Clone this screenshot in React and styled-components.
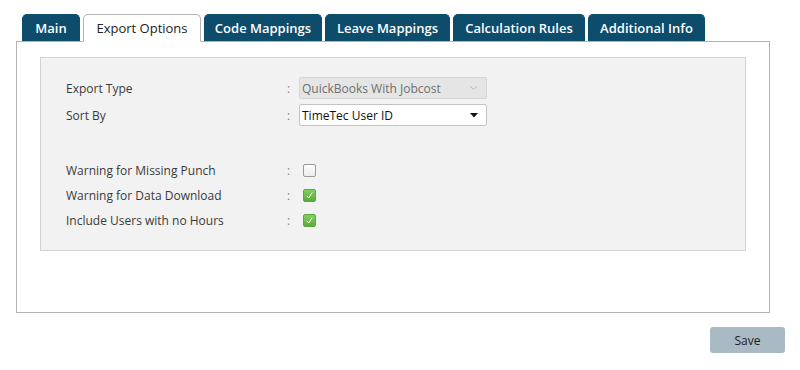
import React, { useState } from 'react';
import styled, { createGlobalStyle } from 'styled-components';

const GlobalStyle = createGlobalStyle`
  body {
    margin: 0;
    background: #ffffff;
    font-family: "Open Sans", "Liberation Sans", sans-serif;
    color: #333;
  }
`;

const Page = styled.div`
  padding: 13px 15px 0 16px;
  width: 800px;
  box-sizing: border-box;
`;

const TabBar = styled.div`
  display: flex;
  gap: 3px;
  margin-left: 6px;
  height: 28px;
  align-items: flex-end;
  position: relative;
  z-index: 1;
`;

const Tab = styled.div`
  box-sizing: border-box;
  width: ${(p) => p.$w}px;
  height: ${(p) => (p.$active ? 28 : 27)}px;
  display: flex;
  align-items: center;
  justify-content: center;
  font-size: 13px;
  font-weight: ${(p) => (p.$active ? 400 : 600)};
  color: ${(p) => (p.$active ? '#222' : '#ffffff')};
  background: ${(p) => (p.$active ? '#ffffff' : '#0d4c6b')};
  border: 1px solid ${(p) => (p.$active ? '#b5b5b5' : '#0d4c6b')};
  border-bottom: ${(p) => (p.$active ? '1px solid #fff' : 'none')};
  border-radius: 5px 5px 0 0;
  cursor: pointer;
  margin-bottom: ${(p) => (p.$active ? '-1px' : '0')};
`;

const Panel = styled.div`
  box-sizing: border-box;
  width: 754px;
  height: 272px;
  border: 1px solid #b3b3b3;
  padding: 15px 23px;
`;

const Inner = styled.div`
  box-sizing: border-box;
  height: 194px;
  background: #f2f2f2;
  border: 1px solid #d3d3d3;
  padding: 19px 25px;
  display: flex;
  flex-direction: column;
`;

const Row = styled.div`
  display: grid;
  grid-template-columns: 221px 12px auto;
  align-items: center;
  height: ${(p) => p.$h || 22}px;
  margin-top: ${(p) => p.$mt || 0}px;
  font-size: 12px;
  color: #3a3a3a;
`;

const Label = styled.span``;

const Colon = styled.span`
  color: #888;
`;

const Select = styled.div`
  box-sizing: border-box;
  width: 188px;
  height: 22px;
  display: flex;
  align-items: center;
  justify-content: space-between;
  padding: 0 8px 0 2px;
  border: 1px solid ${(p) => (p.$disabled ? '#d6d6d6' : '#c4c4c4')};
  border-radius: 2px;
  background: ${(p) => (p.$disabled ? '#e5e5e5' : '#ffffff')};
  color: ${(p) => (p.$disabled ? '#6f6f6f' : '#111')};
  font-size: 12px;
`;

const Check = styled.div`
  box-sizing: border-box;
  width: 13px;
  height: 13px;
  margin-left: 4px;
  border-radius: 2px;
  border: 1px solid ${(p) => (p.$on ? '#5aa83b' : '#9a9a9a')};
  background: ${(p) =>
    p.$on ? 'linear-gradient(#84d062, #5aab3a)' : 'linear-gradient(#fdfdfd, #ececec)'};
  display: flex;
  align-items: center;
  justify-content: center;
`;

const Footer = styled.div`
  display: flex;
  justify-content: flex-end;
  margin-top: 14px;
`;

const SaveButton = styled.button`
  width: 75px;
  height: 26px;
  border: none;
  border-radius: 3px;
  background: #a9bac4;
  color: #222;
  font-family: "Open Sans", "Liberation Sans", sans-serif;
  font-size: 12px;
  cursor: pointer;
`;

const tabs = [
  { name: 'Main', w: 58 },
  { name: 'Export Options', w: 118 },
  { name: 'Code Mappings', w: 118 },
  { name: 'Leave Mappings', w: 125 },
  { name: 'Calculation Rules', w: 132 },
  { name: 'Additional Info', w: 117 },
];

function Tick() {
  return (
    <svg width="9" height="9" viewBox="0 0 10 10">
      <path d="M2 5.4 L4.2 7.8 L8 1.6" fill="none" stroke="#fff" strokeWidth="1.1" />
    </svg>
  );
}

export default function App() {
  const [active, setActive] = useState('Export Options');
  return (
    <Page>
      <GlobalStyle />
      <TabBar>
        {tabs.map((t) => (
          <Tab key={t.name} $w={t.w} $active={t.name === active} onClick={() => setActive(t.name)}>
            {t.name}
          </Tab>
        ))}
      </TabBar>
      <Panel>
        <Inner>
          <Row>
            <Label>Export Type</Label>
            <Colon>:</Colon>
            <Select $disabled>
              <span>QuickBooks With Jobcost</span>
              <svg width="9" height="6" viewBox="0 0 9 6">
                <path d="M1 1 L4.5 4.5 L8 1" fill="none" stroke="#bbb" strokeWidth="1" />
              </svg>
            </Select>
          </Row>
          <Row $mt={5}>
            <Label>Sort By</Label>
            <Colon>:</Colon>
            <Select>
              <span>TimeTec User ID</span>
              <svg width="8" height="5" viewBox="0 0 8 5">
                <path d="M0 0 L8 0 L4 4.5 Z" fill="#111" />
              </svg>
            </Select>
          </Row>
          <Row $mt={34} $h={20}>
            <Label>Warning for Missing Punch</Label>
            <Colon>:</Colon>
            <Check />
          </Row>
          <Row $mt={5} $h={20}>
            <Label>Warning for Data Download</Label>
            <Colon>:</Colon>
            <Check $on>
              <Tick />
            </Check>
          </Row>
          <Row $mt={5} $h={20}>
            <Label>Include Users with no Hours</Label>
            <Colon>:</Colon>
            <Check $on>
              <Tick />
            </Check>
          </Row>
        </Inner>
      </Panel>
      <Footer>
        <SaveButton>Save</SaveButton>
      </Footer>
    </Page>
  );
}
